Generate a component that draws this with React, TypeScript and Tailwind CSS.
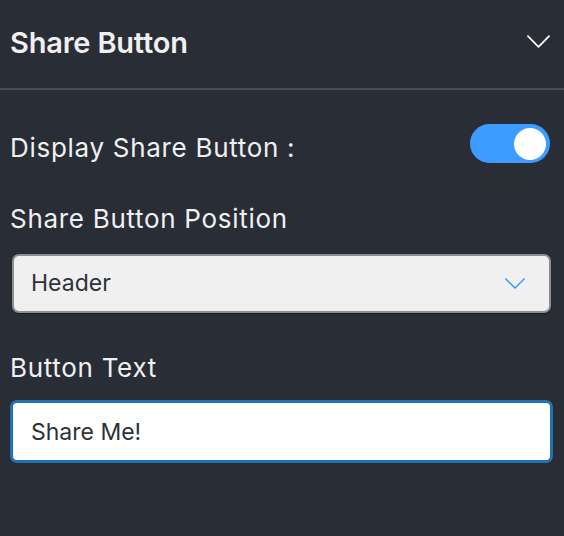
import React, { useState } from 'react';

const Chevron: React.FC<{ className?: string }> = ({ className }) => (
  <svg viewBox="0 0 24 13" fill="none" className={className}>
    <path d="M1 1l11 11L23 1" stroke="currentColor" strokeWidth="1.8" strokeLinecap="round" strokeLinejoin="round" />
  </svg>
);

const App: React.FC = () => {
  const [enabled, setEnabled] = useState(true);
  const [text, setText] = useState('Share Me!');

  return (
    <div className="w-[564px] h-[536px] bg-[#292d36] text-[#f0f0f1] font-['Inter',sans-serif]">
      <div className="h-[88px] flex items-center justify-between pl-[10px] pr-[14px]">
        <h2 className="text-[29px] font-semibold tracking-[-0.2px] leading-none pb-[4px]">Share Button</h2>
        <Chevron className="w-[23px] h-[13px] text-white mb-[5px]" />
      </div>
      <div className="h-[2px] bg-[#474b54]" />

      <div className="px-[10px] pt-[34px]">
        <div className="flex items-center justify-between">
          <span className="text-[26px] tracking-[0.7px] leading-none pt-[9px]">Display Share Button :</span>
          <button
            onClick={() => setEnabled(!enabled)}
            className={`w-[80px] h-[39px] rounded-full flex items-center px-[4px] mr-[4px] ${enabled ? 'bg-[#3d9cff] justify-end' : 'bg-[#6b7280] justify-start'}`}
          >
            <span className="w-[32px] h-[32px] rounded-full bg-white" />
          </button>
        </div>

        <div className="mt-[43px] text-[26px] tracking-[0.7px] leading-none">Share Button Position</div>
        <div className="mt-[22px] ml-[2px] mr-[3px] h-[59px] rounded-[7px] border-2 border-[#8c8f94] bg-[#f0f0f0] flex items-center justify-between pl-[17px] pr-[24px] shadow-[0_1px_1px_rgba(0,0,0,0.4)]">
          <span className="text-[23px] text-[#2c3338]">Header</span>
          <Chevron className="w-[20px] h-[11px] text-[#3b9bff]" />
        </div>

        <div className="mt-[42px] text-[26px] tracking-[0.7px] leading-none">Button Text</div>
        <input
          value={text}
          onChange={(e) => setText(e.target.value)}
          className="mt-[19px] w-[543px] h-[63px] rounded-[7px] border-[3px] border-[#2271b1] bg-white pl-[18px] text-[23px] text-[#2c3338] outline-none"
        />
      </div>
    </div>
  );
};

export default App;
